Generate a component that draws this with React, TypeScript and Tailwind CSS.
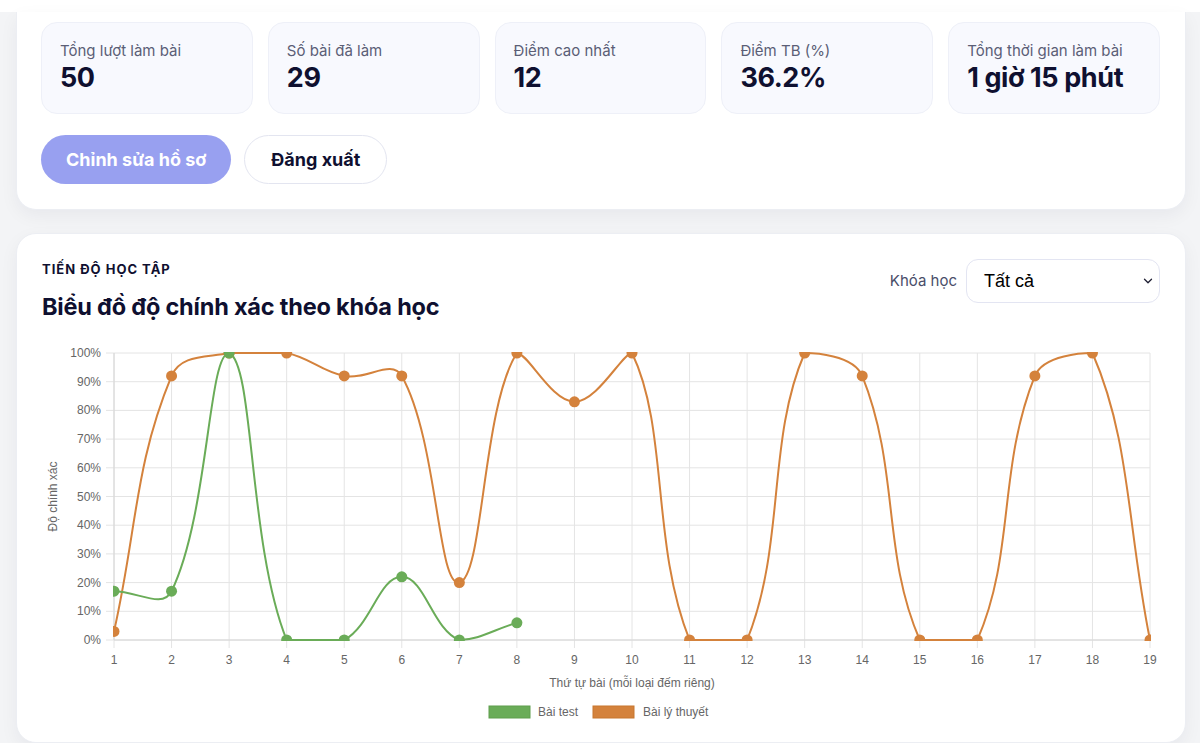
import { ChevronDown } from "lucide-react";

const GREEN = "#6aac58";
const ORANGE = "#d4823c";

const testData = [17, 17, 100, 0, 0, 22, 0, 6];
const theoryData = [3, 92, 100, 100, 92, 92, 20, 100, 83, 100, 0, 0, 100, 92, 0, 0, 92, 100, 0];

const stats = [
  { label: "Tổng lượt làm bài", value: "50" },
  { label: "Số bài đã làm", value: "29" },
  { label: "Điểm cao nhất", value: "12" },
  { label: "Điểm TB (%)", value: "36.2%" },
  { label: "Tổng thời gian làm bài", value: "1 giờ 15 phút" },
];

// chart area inside the svg
const W = 1118;
const H = 394;
const L = 72;
const R = 1108;
const T = 18;
const B = 305;

const px = (i: number) => L + (i * (R - L)) / 18;
const py = (v: number) => B - (v / 100) * (B - T);
const cap = (v: number, min: number, max: number) => Math.max(Math.min(v, max), min);

type Pt = { x: number; y: number };

// same spline as chart.js (tension 0.4, control points capped to the area)
function splinePath(values: number[]) {
  const pts: Pt[] = values.map((v, i) => ({ x: px(i), y: py(v) }));
  const cps = pts.map((p, i) => {
    const prev = pts[i - 1] ?? p;
    const next = pts[i + 1] ?? p;
    const d01 = Math.hypot(p.x - prev.x, p.y - prev.y);
    const d12 = Math.hypot(next.x - p.x, next.y - p.y);
    let s01 = d01 / (d01 + d12);
    let s12 = d12 / (d01 + d12);
    if (isNaN(s01)) s01 = 0;
    if (isNaN(s12)) s12 = 0;
    const fa = 0.4 * s01;
    const fb = 0.4 * s12;
    return {
      prev: { x: cap(p.x - fa * (next.x - prev.x), L, R), y: cap(p.y - fa * (next.y - prev.y), T, B) },
      next: { x: cap(p.x + fb * (next.x - prev.x), L, R), y: cap(p.y + fb * (next.y - prev.y), T, B) },
    };
  });
  let d = `M${pts[0].x},${pts[0].y}`;
  for (let i = 0; i < pts.length - 1; i++) {
    const a = cps[i].next;
    const b = cps[i + 1].prev;
    const p = pts[i + 1];
    d += ` C${a.x},${a.y} ${b.x},${b.y} ${p.x},${p.y}`;
  }
  return d;
}

function AccuracyChart() {
  const ticks = [100, 90, 80, 70, 60, 50, 40, 30, 20, 10, 0];
  const labels = Array.from({ length: 19 }, (_, i) => i + 1);
  const font = "'Liberation Sans', Arial, sans-serif";

  return (
    <svg width={W} height={H} viewBox={`0 0 ${W} ${H}`} className="block">
      <defs>
        <clipPath id="area">
          <rect x={L - 1} y={T - 1} width={R - L + 2} height={B - T + 2} />
        </clipPath>
      </defs>

      {ticks.map((t) => (
        <g key={t}>
          <line x1={L - 8} x2={R} y1={py(t)} y2={py(t)} stroke="#e4e4e4" strokeWidth={1} />
          <text x={59} y={py(t) + 4} textAnchor="end" fontSize={12} fill="#666" fontFamily={font}>
            {t}%
          </text>
        </g>
      ))}
      {labels.map((n, i) => (
        <g key={n}>
          <line x1={px(i)} x2={px(i)} y1={T} y2={B + 8} stroke="#e4e4e4" strokeWidth={1} />
          <text x={px(i)} y={329} textAnchor="middle" fontSize={12} fill="#666" fontFamily={font}>
            {n}
          </text>
        </g>
      ))}
      <line x1={L} x2={R} y1={B} y2={B} stroke="#d6d6d6" strokeWidth={1} />
      <line x1={L} x2={L} y1={T} y2={B} stroke="#d6d6d6" strokeWidth={1} />

      <text
        x={15}
        y={(T + B) / 2}
        transform={`rotate(-90 15 ${(T + B) / 2})`}
        textAnchor="middle"
        fontSize={12}
        fill="#666"
        fontFamily={font}
      >
        Độ chính xác
      </text>
      <text x={(L + R) / 2} y={352} textAnchor="middle" fontSize={12} fill="#666" fontFamily={font}>
        Thứ tự bài (mỗi loại đếm riêng)
      </text>

      <g clipPath="url(#area)">
        <path d={splinePath(theoryData)} fill="none" stroke={ORANGE} strokeWidth={2} />
        <path d={splinePath(testData)} fill="none" stroke={GREEN} strokeWidth={2} />
        {theoryData.map((v, i) => (
          <circle key={`o${i}`} cx={px(i)} cy={py(v)} r={5.5} fill={ORANGE} />
        ))}
        {testData.map((v, i) => (
          <circle key={`g${i}`} cx={px(i)} cy={py(v)} r={5.5} fill={GREEN} />
        ))}
      </g>

      {/* legend */}
      <rect x={447} y={371} width={41} height={12} fill={GREEN} stroke="#5e9e4c" strokeWidth={1} />
      <text x={496} y={381} fontSize={12} fill="#666" fontFamily={font}>
        Bài test
      </text>
      <rect x={551} y={371} width={41} height={12} fill={ORANGE} stroke="#c7772f" strokeWidth={1} />
      <text x={601} y={381} fontSize={12} fill="#666" fontFamily={font}>
        Bài lý thuyết
      </text>
    </svg>
  );
}

export default function App() {
  return (
    <main
      className="min-h-screen bg-[#f3f4f6] overflow-hidden"
      style={{ fontFamily: "Inter, 'Noto Sans', sans-serif" }}
    >
      <div className="h-3 bg-white" />
      <div className="ml-4 mr-[14px]">
        <section className="bg-white rounded-b-[20px] border border-t-0 border-[#eceef3] shadow-[0_6px_18px_rgba(20,20,60,0.05)] pl-[24px] pr-[25px] pt-[10px] pb-[25px]">
          <div className="grid grid-cols-5 gap-[15px]">
            {stats.map((s) => (
              <div
                key={s.label}
                className="h-[92px] rounded-[16px] bg-[#f8f9fe] border border-[#eef0f8] pl-[18px] pt-[18px]"
              >
                <div className="text-[15px] leading-[20px] text-[#5b5e76]">{s.label}</div>
                <div className="text-[27px] leading-[34px] font-bold text-[#0f1030] tracking-[-0.4px]">
                  {s.value}
                </div>
              </div>
            ))}
          </div>
          <div className="flex gap-[13px] mt-[21px]">
            <button className="h-[49px] px-[25px] rounded-full bg-[#98a0f0] text-white text-[18px] font-bold">
              Chỉnh sửa hồ sơ
            </button>
            <button className="h-[49px] px-[26px] rounded-full bg-white border border-[#e3e5f0] text-[#0f1030] text-[18px] font-bold">
              Đăng xuất
            </button>
          </div>
        </section>

        <section className="mt-[23px] bg-white rounded-[20px] border border-[#eceef3] shadow-[0_6px_18px_rgba(20,20,60,0.05)] pl-[25px] pr-[25px] pt-[25px] pb-[13px]">
          <div className="flex justify-between items-start">
            <div className="pt-[1px]">
              <div className="text-[13px] leading-[18px] font-bold tracking-[1px] text-[#0f1030]">
                TIẾN ĐỘ HỌC TẬP
              </div>
              <h2 className="mt-[14px] text-[23.5px] leading-[30px] font-bold text-[#0f1030] tracking-[-0.2px]">
                Biểu đồ độ chính xác theo khóa học
              </h2>
            </div>
            <div className="flex items-center gap-[9px]">
              <span className="text-[15px] text-[#4a4e69]">Khóa học</span>
              <div className="w-[194px] h-[44px] rounded-[12px] border border-[#e3e5f2] bg-white flex items-center justify-between pl-[17px] pr-[4px]">
                <span className="text-[18px] text-black" style={{ fontFamily: "'Liberation Sans', Arial, sans-serif" }}>
                  Tất cả
                </span>
                <ChevronDown size={14} strokeWidth={2.2} className="text-[#1f1f33]" />
              </div>
            </div>
          </div>
          <div className="mt-[13px]">
            <AccuracyChart />
          </div>
        </section>
      </div>
    </main>
  );
}
